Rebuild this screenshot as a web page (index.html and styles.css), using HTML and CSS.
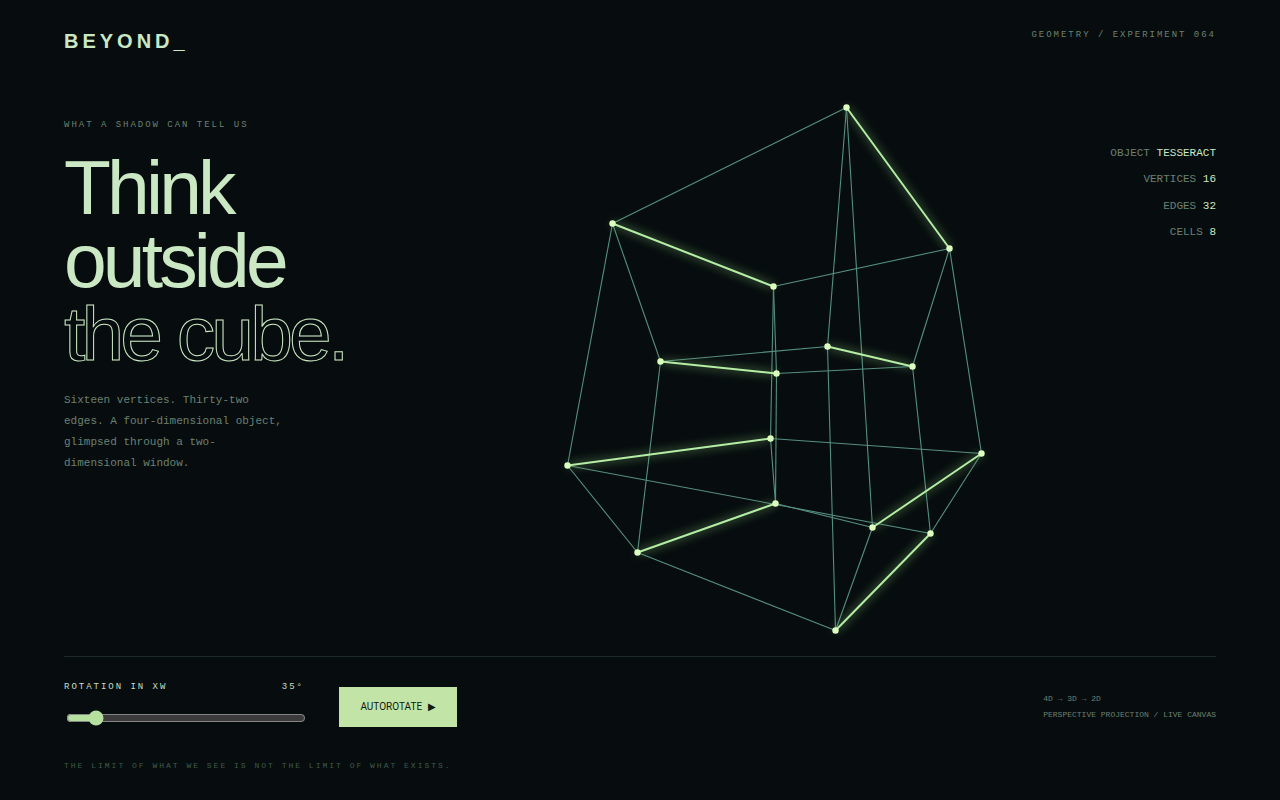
FILE: index.html
```html
<!DOCTYPE html>
<html lang="en">

<head>
    <meta charset="UTF-8" />
    <meta name="viewport" content="width=device-width, initial-scale=1.0" />
    <title>Beyond</title>
    <link rel="stylesheet" href="styles.css">
</head>

<body>
    <header class="header">
        <div class="logo">BEYOND_</div>
        <div class="experiment">GEOMETRY / EXPERIMENT 064</div>
    </header>

    <main class="main">
        <section class="intro">
            <div class="eyebrow">WHAT A SHADOW CAN TELL US</div>
            <h1 class="headline">Think<br>outside<br><span class="outline">the cube.</span></h1>
            <p class="lede">Sixteen vertices. Thirty-two edges. A four-dimensional object, glimpsed through a two-dimensional window.</p>
        </section>

        <svg class="tesseract" viewBox="503.5 89.5 540 550" aria-label="Tesseract projection">
            <g class="edges">
                <line x1="846" y1="107" x2="612" y2="223" />
                <line x1="846" y1="107" x2="827" y2="346" />
                <line x1="846" y1="107" x2="872" y2="527" />
                <line x1="949" y1="248" x2="773" y2="286" />
                <line x1="949" y1="248" x2="912" y2="366" />
                <line x1="949" y1="248" x2="981" y2="453" />
                <line x1="612" y1="223" x2="660" y2="361" />
                <line x1="612" y1="223" x2="567" y2="465" />
                <line x1="773" y1="286" x2="776" y2="373" />
                <line x1="773" y1="286" x2="770" y2="438" />
                <line x1="660" y1="361" x2="827" y2="346" />
                <line x1="660" y1="361" x2="637" y2="552" />
                <line x1="776" y1="373" x2="912" y2="366" />
                <line x1="776" y1="373" x2="775" y2="503" />
                <line x1="827" y1="346" x2="835" y2="630" />
                <line x1="912" y1="366" x2="930" y2="533" />
                <line x1="770" y1="438" x2="981" y2="453" />
                <line x1="770" y1="438" x2="775" y2="503" />
                <line x1="567" y1="465" x2="637" y2="552" />
                <line x1="567" y1="465" x2="930" y2="533" />
                <line x1="981" y1="453" x2="930" y2="533" />
                <line x1="872" y1="527" x2="775" y2="503" />
                <line x1="872" y1="527" x2="835" y2="630" />
                <line x1="637" y1="552" x2="835" y2="630" />
            </g>
            <g class="edges-bright">
                <line x1="846" y1="107" x2="949" y2="248" />
                <line x1="612" y1="223" x2="773" y2="286" />
                <line x1="660" y1="361" x2="776" y2="373" />
                <line x1="827" y1="346" x2="912" y2="366" />
                <line x1="770" y1="438" x2="567" y2="465" />
                <line x1="981" y1="453" x2="872" y2="527" />
                <line x1="775" y1="503" x2="637" y2="552" />
                <line x1="930" y1="533" x2="835" y2="630" />
            </g>
            <g class="vertices">
                <circle cx="846" cy="107" r="3.2" />
                <circle cx="949" cy="248" r="3.2" />
                <circle cx="612" cy="223" r="3.2" />
                <circle cx="773" cy="286" r="3.2" />
                <circle cx="660" cy="361" r="3.2" />
                <circle cx="776" cy="373" r="3.2" />
                <circle cx="827" cy="346" r="3.2" />
                <circle cx="912" cy="366" r="3.2" />
                <circle cx="770" cy="438" r="3.2" />
                <circle cx="567" cy="465" r="3.2" />
                <circle cx="981" cy="453" r="3.2" />
                <circle cx="872" cy="527" r="3.2" />
                <circle cx="775" cy="503" r="3.2" />
                <circle cx="637" cy="552" r="3.2" />
                <circle cx="930" cy="533" r="3.2" />
                <circle cx="835" cy="630" r="3.2" />
            </g>
        </svg>

        <ul class="stats">
            <li>OBJECT <span>TESSERACT</span></li>
            <li>VERTICES <span>16</span></li>
            <li>EDGES <span>32</span></li>
            <li>CELLS <span>8</span></li>
        </ul>
    </main>

    <section class="controls">
        <div class="slider-group">
            <div class="slider-label">
                <span>ROTATION IN XW</span>
                <span>35°</span>
            </div>
            <input class="slider" type="range" min="0" max="360" value="35">
        </div>
        <button class="autorotate">AUTOROTATE <span class="arrow">▶</span></button>
        <div class="projection">
            <div>4D → 3D → 2D</div>
            <div>PERSPECTIVE PROJECTION / LIVE CANVAS</div>
        </div>
    </section>

    <footer class="footer">THE LIMIT OF WHAT WE SEE IS NOT THE LIMIT OF WHAT EXISTS.</footer>
</body>

</html>
```

FILE: styles.css
```css
* {
    box-sizing: border-box;
    margin: 0;
    padding: 0;
}

body {
    font-family: "Liberation Mono", monospace;
    background-color: #070d0e;
    color: #cbe8c4;
    display: flex;
    flex-direction: column;
    height: 100vh;
    padding: 0 64px;
    overflow: hidden;
}

.header {
    display: flex;
    justify-content: space-between;
    align-items: flex-start;
    height: 90px;
    padding-top: 30px;
}

.logo {
    font-family: "Liberation Sans", sans-serif;
    font-size: 20px;
    font-weight: 700;
    letter-spacing: 0.2em;
}

.experiment {
    font-size: 9px;
    letter-spacing: 0.22em;
    color: #6b8072;
}

.main {
    flex: 1;
    display: grid;
    grid-template-columns: 440px 540px 1fr;
    align-items: start;
}

.eyebrow {
    font-size: 9px;
    letter-spacing: 0.22em;
    color: #6b8072;
    margin-top: 30px;
    margin-bottom: 21px;
}

.headline {
    font-family: "Liberation Sans", sans-serif;
    font-size: 76.8px;
    font-weight: 400;
    line-height: 73px;
    letter-spacing: -0.05em;
    color: #cbe8c4;
}

.outline {
    color: transparent;
    -webkit-text-stroke: 1px #cbe8c4;
}

.lede {
    font-size: 11px;
    line-height: 21px;
    color: #6b8072;
    max-width: 220px;
    margin-top: 20px;
}

.tesseract {
    width: 540px;
    height: 550px;
}

.edges line {
    stroke: #558f7f;
    stroke-width: 1.1;
}

.edges-bright line {
    stroke: #b5eda5;
    stroke-width: 2;
}

.edges-bright {
    filter: drop-shadow(0 0 5px #8fd080);
}

.vertices circle {
    fill: #dcffc0;
}

.stats {
    list-style: none;
    font-size: 11px;
    line-height: 26.4px;
    text-align: right;
    color: #6b8072;
    margin-top: 50px;
}

.stats span {
    color: #cbe8c4;
}

.controls {
    display: flex;
    align-items: center;
    border-top: 1px solid #1e2a28;
    height: 90px;
    padding-top: 10px;
}

.slider-group {
    width: 240px;
    margin-bottom: 4px;
}

.slider-label {
    display: flex;
    justify-content: space-between;
    font-size: 9px;
    letter-spacing: 0.22em;
    color: #c8dcc4;
    margin-bottom: 18px;
}

.slider {
    display: block;
    width: 240px;
    margin: 2px;
    color-scheme: dark;
    accent-color: #b5e0a0;
}

.autorotate {
    font-family: "Roboto", sans-serif;
    font-size: 10px;
    color: #0f1a14;
    background-color: #c2e4a6;
    border: none;
    width: 118px;
    height: 40px;
    margin-left: 35px;
}

.arrow {
    margin-left: 3px;
}

.projection {
    margin-left: auto;
    font-size: 8px;
    line-height: 16px;
    color: #6b8072;
}

.footer {
    font-size: 8px;
    letter-spacing: 0.25em;
    color: #3f5a4a;
    padding-top: 15px;
    height: 54px;
}
```
